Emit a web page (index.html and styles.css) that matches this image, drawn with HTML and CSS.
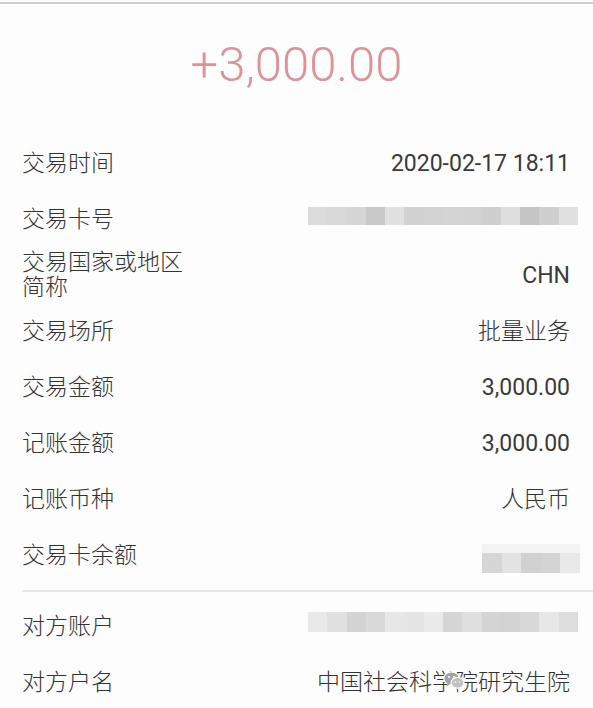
FILE: index.html
```html
<!DOCTYPE html>
<html>

<head>
  <title>交易详情</title>
  <link rel="stylesheet" href="styles.css">
</head>

<body>
  <div class="topline"></div>
  <div class="amount">+3,000.00</div>

  <div class="list">
    <div class="row">
      <span class="label">交易时间</span>
      <span class="value">2020-02-17 18:11</span>
    </div>
    <div class="row">
      <span class="label">交易卡号</span>
      <span class="mosaic mosaic-card"></span>
    </div>
    <div class="row">
      <span class="label">交易国家或地区<br />简称</span>
      <span class="value">CHN</span>
    </div>
    <div class="row">
      <span class="label">交易场所</span>
      <span class="value cjk">批量业务</span>
    </div>
    <div class="row">
      <span class="label">交易金额</span>
      <span class="value">3,000.00</span>
    </div>
    <div class="row">
      <span class="label">记账金额</span>
      <span class="value">3,000.00</span>
    </div>
    <div class="row">
      <span class="label">记账币种</span>
      <span class="value cjk">人民币</span>
    </div>
    <div class="row">
      <span class="label">交易卡余额</span>
      <span class="mosaic mosaic-balance"></span>
    </div>
  </div>

  <div class="divider"></div>

  <div class="list">
    <div class="row">
      <span class="label">对方账户</span>
      <span class="mosaic mosaic-account"></span>
    </div>
    <div class="row watermark-row">
      <span class="label">对方户名</span>
      <span class="value cjk">中国社会科学院研究生院</span>
      <!-- wechat watermark on top of the name -->
      <svg class="watermark" width="22" height="19" viewBox="0 0 22 19">
        <ellipse cx="8.5" cy="7.5" rx="7.8" ry="6.6" fill="#a3a3a3" stroke="#fff" stroke-width="1.2" />
        <path d="M4 12.5 L3.2 15.5 L7 13.6 Z" fill="#a3a3a3" />
        <ellipse cx="14.5" cy="11.8" rx="6.5" ry="5.4" fill="#c2c2c2" stroke="#fff" stroke-width="1.2" />
        <circle cx="6" cy="6" r="1" fill="#fff" />
        <circle cx="11" cy="6" r="1" fill="#fff" />
        <circle cx="12.5" cy="11" r="0.8" fill="#fff" />
        <circle cx="16.5" cy="11" r="0.8" fill="#fff" />
      </svg>
    </div>
  </div>
</body>

</html>
```

FILE: styles.css
```css
body {
  margin: 0;
  background: #fdfdfd;
  color: #383838;
  font-family: Roboto, "Noto Sans CJK SC", sans-serif;
}

.topline {
  margin-top: 2px;
  height: 2px;
  background: #ccd0d0;
}

.amount {
  height: 131px;
  line-height: 122px;
  text-align: center;
  font-size: 49px;
  font-weight: 300;
  color: #df9296;
}

.row {
  height: 56px;
  padding: 0 23px 0 22px;
  display: flex;
  justify-content: space-between;
  align-items: center;
  font-size: 23px;
}

.label {
  line-height: 25px;
  font-weight: 300;
  color: #333;
}

.value {
  line-height: 25px;
  color: #3a3a3a;
}

.value.cjk {
  font-weight: 300;
  color: #333;
}

.divider {
  margin: 7px 0 6px 22px;
  height: 2px;
  background: #e6e6e6;
}

.mosaic {
  display: block;
}

.mosaic-card {
  width: 270px;
  height: 18px;
  margin-right: -8px;
  margin-bottom: 6px;
  background: linear-gradient(to right,
      #dcdcdc 0 19px, #d9d9d9 19px 39px, #d6d6d6 39px 58px, #c9c9c9 58px 77px,
      #e1e1e1 77px 96px, #d1d1d1 96px 116px, #d3d3d3 116px 135px, #d4d4d4 135px 154px,
      #d3d3d3 154px 174px, #cfcfcf 174px 193px, #dedede 193px 212px, #c5c5c5 212px 231px,
      #cfcfcf 231px 251px, #e0e0e0 251px 270px);
}

.mosaic-balance {
  width: 98px;
  height: 20px;
  margin-right: -10px;
  margin-top: 7px;
  border-top: 9px solid #f3f3f3;
  background: linear-gradient(to right,
      #d6d6d6 0 20px, #e3e3e3 20px 39px, #d1d1d1 39px 59px, #d4d4d4 59px 78px,
      #e9e9e9 78px 98px);
}

.mosaic-account {
  width: 270px;
  height: 20px;
  margin-right: -8px;
  margin-bottom: 8px;
  background: linear-gradient(to right,
      #e9e9e9 0 19px, #e0e0e0 19px 39px, #d3d3d3 39px 58px, #d9d9d9 58px 77px,
      #e7e7e7 77px 96px, #e5e5e5 96px 116px, #eaeaea 116px 135px, #d6d6d6 135px 154px,
      #dfdfdf 154px 174px, #d4d4d4 174px 193px, #d2d2d2 193px 212px, #d8d8d8 212px 231px,
      #e7e7e7 231px 251px, #dddddd 251px 270px);
}

.watermark-row {
  position: relative;
}

.watermark {
  position: absolute;
  left: 443px;
  top: 17px;
}
```
